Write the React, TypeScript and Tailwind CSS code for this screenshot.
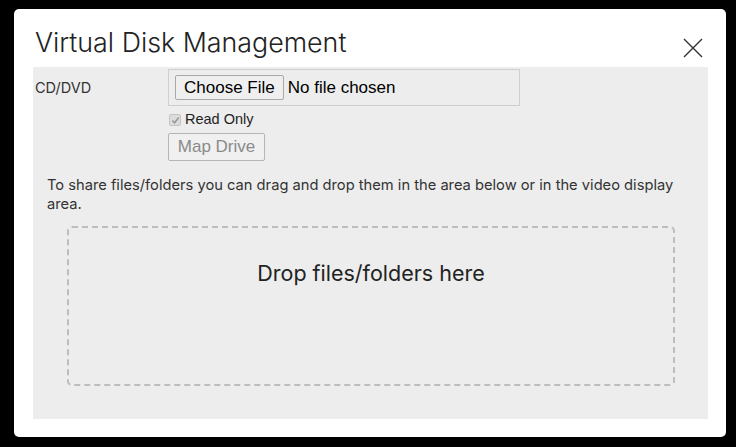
import React from "react";

export default function App() {
  return (
    <div className="w-[736px] h-[447px] bg-black pt-[9px] pl-[14px]">
      <div className="w-[712px] h-[428px] bg-white rounded-[5px] px-[19px] pr-[18px] flex flex-col">
        <div className="h-[58px] flex items-start justify-between">
          <div className="mt-[17px] ml-[2px] text-[26.8px] leading-[33px] text-[#222] font-light" style={{ fontFamily: "Inter, 'Noto Sans', sans-serif" }}>
            Virtual Disk Management
          </div>
          <svg className="mt-[29px] mr-[5px]" width="20" height="20" viewBox="0 0 20 20">
            <path d="M1 1 L19 19 M19 1 L1 19" stroke="#333" strokeWidth="1.4" fill="none" />
          </svg>
        </div>
        <div className="h-[352px] bg-[#ededed] pt-[2px] px-[2px] flex flex-col" style={{ fontFamily: "'Liberation Sans', Arial, sans-serif" }}>
          <div className="flex">
            <div className="w-[133px] text-[14.5px] leading-[18px] text-[#333] pt-[10px]" style={{ fontFamily: "Inter, 'Noto Sans', sans-serif" }}>CD/DVD</div>
            <div className="flex flex-col">
              <div className="w-[352px] h-[37px] border border-[#cfcfcf] flex items-center pl-[6px]">
                <div className="h-[25px] px-[8px] border border-[#a9a9a9] rounded-[2px] bg-[#efefef] text-[17px] text-black flex items-center">
                  Choose File
                </div>
                <span className="ml-[4px] text-[17px] text-black">No file chosen</span>
              </div>
              <div className="flex items-center mt-[5px] h-[18px]">
                <div className="w-[12px] h-[12px] ml-[1px] rounded-[2px] bg-[#dcdcdc] border border-[#c4c4c4] flex items-center justify-center">
                  <svg width="9" height="9" viewBox="0 0 10 10">
                    <path d="M1.5 5.2 L4 7.6 L8.6 1.8" stroke="#999" strokeWidth="1.8" fill="none" />
                  </svg>
                </div>
                <span className="ml-[4px] text-[14.5px] text-[#222]">Read Only</span>
              </div>
              <div className="mt-[4px] w-[97px] h-[28px] border border-[#b5b5b5] rounded-[2px] bg-[#f0f0f0] text-[17px] text-[#8a8a8a] flex items-center justify-center">
                Map Drive
              </div>
            </div>
          </div>
          <div className="mt-[15px] pl-[12px] pr-[20px] text-[14.7px] leading-[19px] text-[#333]" style={{ fontFamily: "Inter, 'Noto Sans', sans-serif" }}>
            To share files/folders you can drag and drop them in the area below or in the video display area.
          </div>
          <div className="mt-[12px] ml-[32px] w-[608px] h-[160px] border-2 border-dashed border-[#bdbdbd] rounded-[5px] flex justify-center pt-[31px]">
            <span className="text-[21.5px] leading-[28px] text-[#222]" style={{ fontFamily: "Inter, 'Noto Sans', sans-serif" }}>
              Drop files/folders here
            </span>
          </div>
        </div>
      </div>
    </div>
  );
}
